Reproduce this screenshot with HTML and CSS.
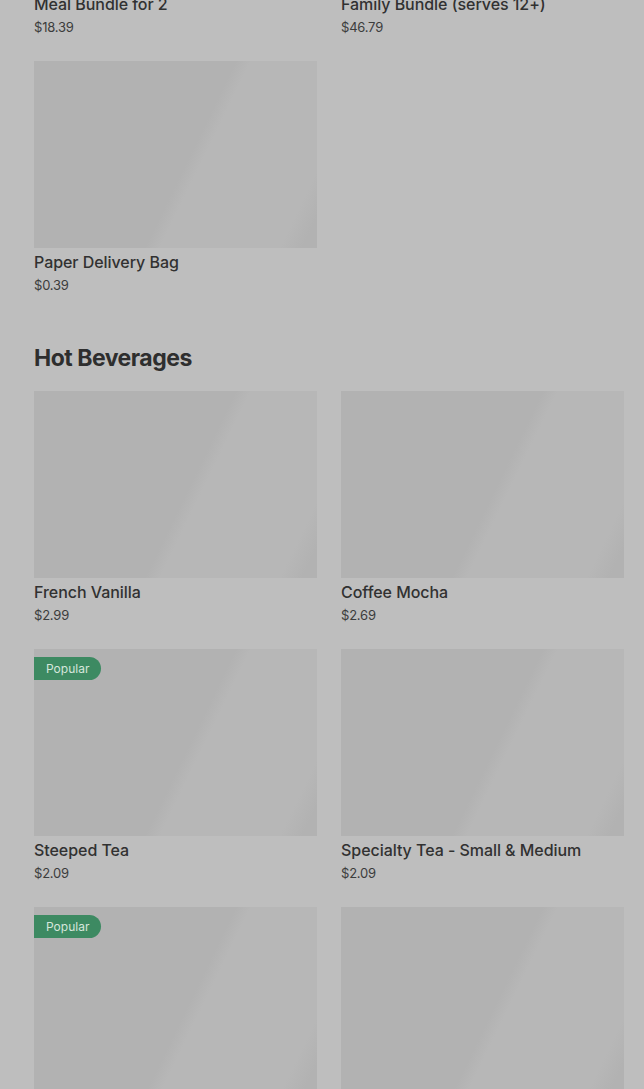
FILE: index.html
```html
<!DOCTYPE html>
<html>
<head>
    <title>Menu</title>
    <link rel="stylesheet" href="styles.css">
</head>
<body>
    <div id="menu">
        <section class="menu-section first">
            <div class="item-grid">
                <div class="item">
                    <div class="item-image"></div>
                    <p class="item-name">Meal Bundle for 2</p>
                    <p class="item-price">$18.39</p>
                </div>
                <div class="item">
                    <div class="item-image"></div>
                    <p class="item-name">Family Bundle (serves 12+)</p>
                    <p class="item-price">$46.79</p>
                </div>
                <div class="item">
                    <div class="item-image"></div>
                    <p class="item-name">Paper Delivery Bag</p>
                    <p class="item-price">$0.39</p>
                </div>
            </div>
        </section>

        <section class="menu-section">
            <h2 class="section-title">Hot Beverages</h2>
            <div class="item-grid">
                <div class="item">
                    <div class="item-image"></div>
                    <p class="item-name">French Vanilla</p>
                    <p class="item-price">$2.99</p>
                </div>
                <div class="item">
                    <div class="item-image"></div>
                    <p class="item-name">Coffee Mocha</p>
                    <p class="item-price">$2.69</p>
                </div>
                <div class="item">
                    <div class="item-image">
                        <span class="badge">Popular</span>
                    </div>
                    <p class="item-name">Steeped Tea</p>
                    <p class="item-price">$2.09</p>
                </div>
                <div class="item">
                    <div class="item-image"></div>
                    <p class="item-name">Specialty Tea - Small &amp; Medium</p>
                    <p class="item-price">$2.09</p>
                </div>
                <div class="item">
                    <div class="item-image">
                        <span class="badge">Popular</span>
                    </div>
                    <p class="item-name">Original Blend Coffee</p>
                    <p class="item-price">$1.99</p>
                </div>
                <div class="item">
                    <div class="item-image"></div>
                    <p class="item-name">Hot Chocolate</p>
                    <p class="item-price">$2.49</p>
                </div>
            </div>
        </section>
    </div>
</body>
</html>
```

FILE: styles.css
```css
body {
    font-family: Inter, "Noto Sans", sans-serif;
    background-color: #bebebe;
    margin: 0;
    padding: 0;
    height: 1089px;
    overflow: hidden;
}

#menu {
    padding: 0 20px 0 34px;
}

.menu-section.first {
    margin-top: -197px;
}

.menu-section + .menu-section {
    margin-top: 47px;
}

.section-title {
    font-size: 23px;
    line-height: 32px;
    font-weight: 700;
    letter-spacing: -0.5px;
    color: #2e2e2e;
    margin: 0 0 17px;
}

.item-grid {
    display: grid;
    grid-template-columns: 1fr 1fr;
    gap: 24px;
}

.item-image {
    position: relative;
    height: 187px;
    background: linear-gradient(116deg, #b2b2b2 0%, #b2b2b2 54%, #b7b7b7 58%, #b7b7b7 90%, #b2b2b2 96%);
}

.item-name {
    font-size: 16px;
    line-height: 20px;
    font-weight: 500;
    letter-spacing: -0.05px;
    color: #313131;
    margin: 4px 0 0;
}

.item-price {
    font-size: 13px;
    line-height: 20px;
    letter-spacing: -0.2px;
    color: #3c3c3c;
    margin: 3px 0 0;
}

.badge {
    position: absolute;
    top: 8px;
    left: 0;
    height: 23px;
    line-height: 23px;
    padding: 0 12px;
    font-size: 12px;
    color: #d6e6dc;
    background-color: #3d8a62;
    border-radius: 0 12px 12px 0;
}
```
